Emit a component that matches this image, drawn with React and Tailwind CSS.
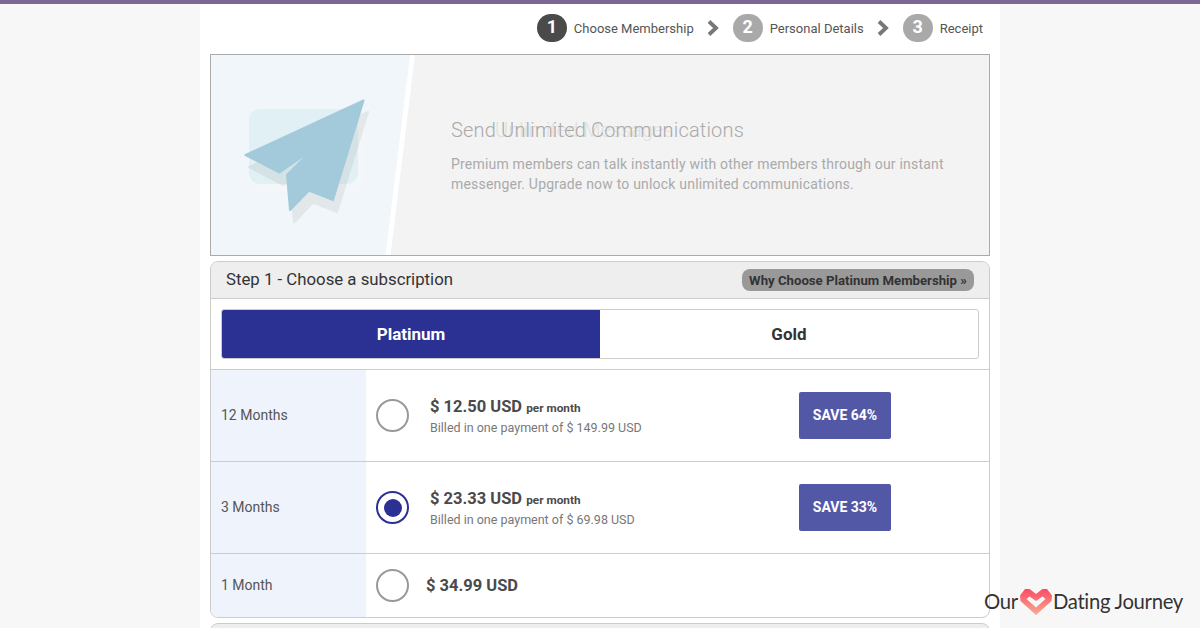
const Step = ({ n, label, active }) => (
  <div className="flex items-center">
    <div className={`flex h-[28px] w-[30px] items-center justify-center rounded-full pb-[3px] text-[18px] font-bold text-white ${active ? "bg-[#4a4a4a]" : "bg-[#a9a9a9]"}`}>{n}</div>
    <span className="ml-[7px] text-[13px] leading-none text-[#555]">{label}</span>
  </div>
);

const Chevron = () => (
  <svg width="13" height="18" viewBox="0 0 13 18" className="mx-[13px]">
    <path d="M2 2.5 L9 9 L2 15.5" fill="none" stroke="#777" strokeWidth="3.8" />
  </svg>
);

const Radio = ({ checked }) =>
  checked ? (
    <div className="flex h-[33px] w-[33px] shrink-0 items-center justify-center rounded-full border-[2.5px] border-[#2a3192]">
      <div className="h-[18px] w-[18px] rounded-full bg-[#2a3192]" />
    </div>
  ) : (
    <div className="h-[33px] w-[33px] shrink-0 rounded-full border-[2px] border-[#999] bg-white" />
  );

const Plan = ({ term, price, billed, save, checked }) => (
  <div className="flex h-[92px] border-t border-[#ccc]">
    <div className="flex w-[155px] shrink-0 items-center bg-[#eff3fb] pl-[10px] pb-[1px] text-[14px] text-[#555]">{term}</div>
    <div className="flex flex-1 items-center pl-[10px]">
      <Radio checked={checked} />
      <div className="ml-[21px] w-[369px] pt-[1px]">
        <div className="text-[16.5px] leading-[22px] font-bold text-[#4a4a4a]">
          {price} <span className="text-[11.8px] text-[#4a4a4a]">per month</span>
        </div>
        <div className="text-[12.5px] leading-[18px] text-[#777]">{billed}</div>
      </div>
      <div className="flex h-[47px] w-[92px] items-center justify-center rounded-[2px] bg-[#5258a6] text-[14px] font-bold text-white">{save}</div>
    </div>
  </div>
);

export default function App() {
  return (
    <div className="relative h-[628px] w-[1200px] overflow-hidden bg-[#f7f7f7] font-['Roboto',sans-serif]">
      <div className="h-[4px] bg-[#7d6795]" />
      <div className="mx-auto h-[624px] w-[800px] bg-white px-[10px]">
        <div className="flex h-[50px] items-center justify-end pr-[7px] pb-[2px]">
          <Step n="1" label="Choose Membership" active />
          <Chevron />
          <Step n="2" label="Personal Details" />
          <Chevron />
          <Step n="3" label="Receipt" />
        </div>

        <div className="relative flex h-[202px] items-center border border-[#aaa] bg-[#f3f3f3] pl-[240px]">
          <svg className="absolute top-0 left-0" width="210" height="200" viewBox="210 55 210 200">
            <path d="M210 55 H409 L384.5 255 H210 Z" fill="#f0f6fa" />
            <path d="M409 55 H414 L389.5 255 H384.5 Z" fill="#fff" />
            <rect x="248" y="115" width="116" height="76" rx="12" fill="#f3f7f9" />
            <rect x="248" y="109" width="109" height="75" rx="11" fill="#e1f0f4" />
            <path d="M367 112 L248 167 L282.5 185 L315.5 162 L290 187 L293 222.5 L312 202.5 L336 212 Z" fill="#a0a0a0" stroke="#a0a0a0" strokeWidth="2" strokeLinejoin="round" opacity="0.17" />
            <path d="M362.5 100.5 L244.5 155 L278.5 172.5 L311 150 L286 175 L289 210 L308 190.5 L332 200 Z" fill="#a2cada" stroke="#a2cada" strokeWidth="2" strokeLinejoin="round" />
          </svg>
          <div className="relative pt-[1px]">
            <div className="absolute top-[1px] left-[44px] text-[20px] leading-[26px] font-light whitespace-nowrap text-[#e0e0e0]">Unlimited Messages</div>
            <h2 className="relative text-[20px] leading-[26px] font-light tracking-[0.18px] text-[#aaa]">Send Unlimited Communications</h2>
            <p className="mt-[11px] w-[510px] text-[14px] leading-[20px] tracking-[0.2px] text-[#aaa]">
              Premium members can talk instantly with other members through our instant messenger. Upgrade now to unlock unlimited communications.
            </p>
          </div>
        </div>

        <div className="mt-[5px] h-[357px] overflow-hidden rounded-[8px] border border-[#ccc]">
          <div className="flex h-[37px] items-center justify-between border-b border-[#ccc] bg-[#eee] pr-[15px] pl-[15px]">
            <span className="pb-[1px] text-[16.8px] text-[#333]">Step 1 - Choose a subscription</span>
            <span className="flex h-[22px] w-[232px] items-center justify-center rounded-[8px] bg-[#999] pt-[1px] text-[13.2px] font-bold whitespace-nowrap text-[#333]">Why Choose Platinum Membership »</span>
          </div>
          <div className="h-[70px] p-[10px]">
            <div className="flex h-[50px] overflow-hidden rounded-[3px] border border-[#ccc]">
              <div className="flex w-[378px] items-center justify-center bg-[#2a3192] pt-[1px] text-[17px] font-bold text-white">Platinum</div>
              <div className="flex flex-1 items-center justify-center pt-[1px] text-[17px] font-bold text-[#333]">Gold</div>
            </div>
          </div>
          <Plan term="12 Months" price="$ 12.50 USD" billed="Billed in one payment of $ 149.99 USD" save="SAVE 64%" />
          <Plan term="3 Months" price="$ 23.33 USD" billed="Billed in one payment of $ 69.98 USD" save="SAVE 33%" checked />
          <div className="flex h-[64px] border-t border-[#ccc]">
            <div className="flex w-[155px] shrink-0 items-center bg-[#eff3fb] pl-[10px] text-[14px] text-[#555]">1 Month</div>
            <div className="flex flex-1 items-center pl-[10px]">
              <Radio />
              <span className="ml-[17px] pt-[1px] text-[16.5px] font-bold text-[#4a4a4a]">$ 34.99 USD</span>
            </div>
          </div>
        </div>
        <div className="mt-[5px] h-[20px] rounded-t-[8px] border border-[#ccc] bg-[#eee]" />
      </div>

      <div className="absolute top-[585px] left-[984px] flex items-center text-[20.3px] leading-[32px] tracking-[-0.3px] text-[#333] font-['Lato',sans-serif] [text-shadow:0_0_3px_rgba(255,255,255,0.9)]">
        <span>Our</span>
        <svg width="34" height="28" viewBox="0 0 34 28" className="mt-[1px] ml-[1px]">
          <defs>
            <linearGradient id="heart" x1="0" y1="0" x2="0" y2="1">
              <stop offset="0" stopColor="#fb4a63" />
              <stop offset="1" stopColor="#f9ab92" />
            </linearGradient>
          </defs>
          <path d="M17 6 L10.5 1 L6 1 L1 7.5 L1.5 13 L17 27 L32.5 13 L33 7.5 L28 1 L23.5 1 Z M17 13 L23.5 8.5 L26.5 11 L17 19.5 L7.5 11 L10.5 8.5 Z" fillRule="evenodd" fill="url(#heart)" />
        </svg>
        <span>Dating Journey</span>
      </div>
    </div>
  );
}
